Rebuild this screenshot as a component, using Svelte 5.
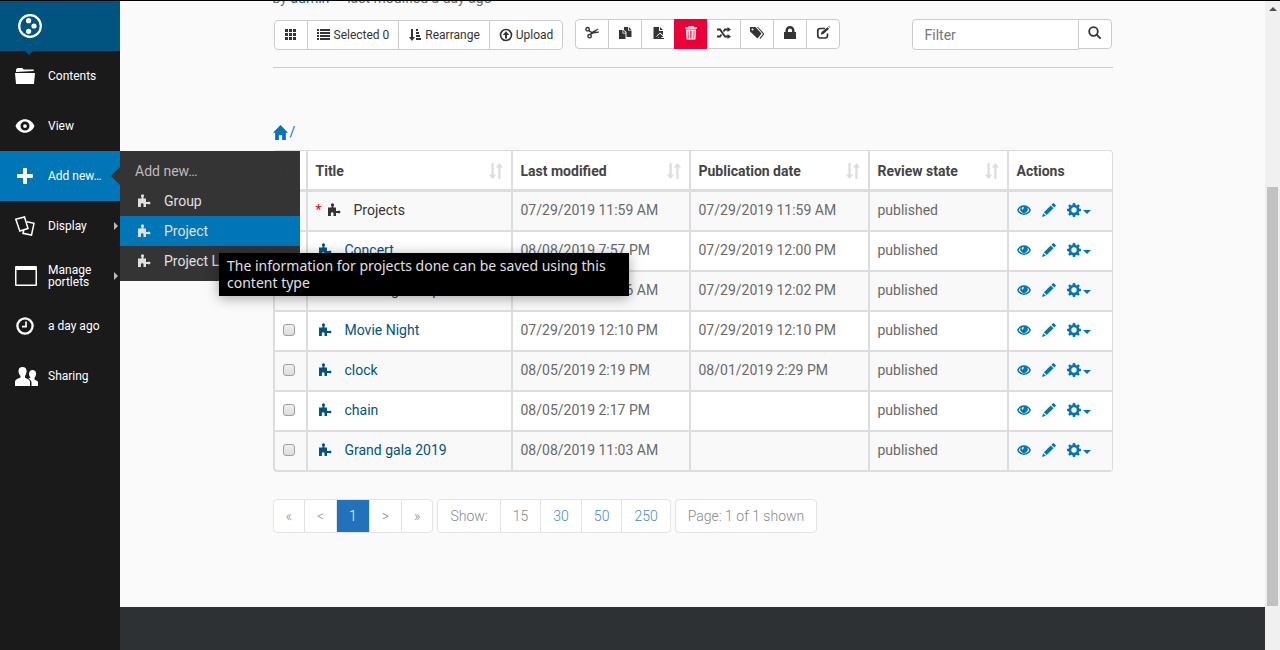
<script>
  const nav = [
    { label: 'Contents', icon: 'folder' },
    { label: 'View', icon: 'view' },
    { label: 'Add new…', icon: 'add', active: true },
    { label: 'Display', icon: 'display', more: true },
    { label: 'Manage portlets', icon: 'window', more: true },
    { label: 'a day ago', icon: 'history' },
    { label: 'Sharing', icon: 'people' }
  ];
  const types = ['Group', 'Project', 'Project List'];
  const listTools = [
    { icon: 'grid', label: '', title: 'Columns' },
    { icon: 'list', label: 'Selected 0' },
    { icon: 'sort', label: 'Rearrange' },
    { icon: 'upload', label: 'Upload' }
  ];
  const tools = [
    ['cut', 'Cut'], ['copy', 'Copy'], ['paste', 'Paste'], ['trash', 'Delete'],
    ['shuffle', 'Rename'], ['tags', 'Tags'], ['lock', 'State'], ['edit', 'Properties']
  ];
  const columns = ['Title', 'Last modified', 'Publication date', 'Review state'];
  const rows = [
    { title: 'Projects', modified: '07/29/2019 11:59 AM', published: '07/29/2019 11:59 AM', self: true },
    { title: 'Concert', modified: '08/08/2019 7:57 PM', published: '07/29/2019 12:00 PM' },
    { title: 'Wedding Group', modified: '08/08/2019 11:26 AM', published: '07/29/2019 12:02 PM' },
    { title: 'Movie Night', modified: '07/29/2019 12:10 PM', published: '07/29/2019 12:10 PM' },
    { title: 'clock', modified: '08/05/2019 2:19 PM', published: '08/01/2019 2:29 PM' },
    { title: 'chain', modified: '08/05/2019 2:17 PM', published: '' },
    { title: 'Grand gala 2019', modified: '08/08/2019 11:03 AM', published: '' }
  ];
  const pages = ['«', '<', '1', '>', '»'];
  const sizes = ['15', '30', '50', '250'];
</script>

{#snippet glyph(name)}
  <svg class="glyph" viewBox="0 0 14 14" aria-hidden="true">
    {#if name === 'grid'}
      <path d="M1 1h3v3H1zM5 1h3v3H5zM9 1h3v3H9zM1 5h3v3H1zM5 5h3v3H5zM9 5h3v3H9zM1 9h3v3H1zM5 9h3v3H5zM9 9h3v3H9z" />
    {:else if name === 'list'}
      <path d="M0 1h2v2H0zM3 1h10v2H3zM0 4h2v2H0zM3 4h10v2H3zM0 7h2v2H0zM3 7h10v2H3zM0 10h2v2H0zM3 10h10v2H3z" />
    {:else if name === 'sort'}
      <path d="M3 1h2v8h2l-3 4-3-4h2zM8 1h2v2H8zM8 4h3v2H8zM8 7h4v2H8zM8 10h5v2H8z" />
    {:else if name === 'upload'}
      <path fill-rule="evenodd" d="M7 .7a6.3 6.3 0 1 1 0 12.600a6.300 6.300 0 0 1 0-12.600zm0 1.600a4.700 4.700 0 1 0 0 9.400a4.700 4.700 0 0 0 0-9.400zM7 3.300L10.200 7H8v3.500H6V7H3.800z" />
    {:else if name === 'cut'}
      <g fill="none" stroke="currentColor"><circle cx="2.600" cy="3.200" r="1.700" stroke-width="1.400" /><circle cx="4.600" cy="10.200" r="1.700" stroke-width="1.400" /></g>
      <path d="M3.500 3.800L7 5.800 12.600 2.700l1 .6-3.500 2.500 3.700-.3v1.300l-5.500.7L5.800 9 4.700 8.300l1.200-1.600-2.900-1.800z" />
    {:else if name === 'copy'}
      <path d="M6 1h4v3.500h3.500V11H8.500V6L6 4zM10.800.9L13.600 3.700h-2.800zM1 4h3.500v3.500H7.500V13H1zM5.200 4L7.800 6.700H5.200z" />
    {:else if name === 'paste'}
      <path d="M2.500 1H8v4h4v4L9 6.500 5 10.500h2V13H2.500zM9 1l3 3H9zM9 7.500l3.500 3.500h-2v1h2.500v1H6v-1h1.500v-1h-2z" />
    {:else if name === 'trash'}
      <path fill-rule="evenodd" d="M4.500 0h5v1.200H13v1.600H1V1.200h3.500zm1.200.8v.5h2.600V.8zM2 3.500h10l-.6 10H2.600zm1.600 1l.3 8h.8l-.3-8zm2.400 0v8h.7v-8zm1.500 0v8h.7v-8zm2.200 0l-.3 8h.8l.3-8z" />
    {:else if name === 'shuffle'}
      <path fill="none" stroke="currentColor" stroke-width="1.800" d="M0 3.500h3l5 7h3M0 10.500h3l1.500-2M6.500 5.500l1.500-2h3" /><path d="M10.500 1L14 3.500 10.500 6zM10.500 8l3.500 2.500-3.500 2.500z" />
    {:else if name === 'tags'}
      <path fill-rule="evenodd" d="M0 1h5.500L11.500 7.500 7.500 12.500 0 5.500zM2.500 2.500a1 1 0 1 0 0 2a1 1 0 0 0 0-2zM7 1h1l6.500 7-4.300 5-.8-.8L13 8z" />
    {:else if name === 'lock'}
      <path fill-rule="evenodd" d="M1 6h1.500V4.500a4.500 4.500 0 0 1 9 0V6H13v7H1zM5 6h4V4.500a2 2 0 0 0-4 0z" />
    {:else if name === 'edit'}
      <path fill="none" stroke="currentColor" stroke-width="1.700" d="M9 2.500H4A2.300 2.300 0 0 0 1.800 4.800v5A2.300 2.300 0 0 0 4 12h5.300a2.300 2.300 0 0 0 2.200-2.200V7.500" /><path d="M11.500 1.300l1.500 1.500-5.500 5.200-2.800.8.900-2.800zM12.200.6l.8-.6 1 1-.6.8z" />
    {:else if name === 'search'}
      <circle cx="5.500" cy="5.500" r="4.300" fill="none" stroke="currentColor" stroke-width="1.800" /><path d="M8 9.300L9.300 8l4 4-1.300 1.300z" />
    {:else if name === 'home'}
      <path d="M7 0l7 7.300h-2V14H8.500V9.500h-3V14H2V7.300H0z" />
    {:else if name === 'order'}
      <path d="M3 0h2v10h2.200L4 14 .7 10H3zM10 0l3.300 4H11v10H9V4H6.800z" />
    {:else if name === 'eye'}
      <path fill-rule="evenodd" d="M0 7C2.500.5 11.500.5 14 7 11.500 13.500 2.500 13.500 0 7zm1.600 0c2.200 4.600 8.600 4.600 10.800 0-.6-1.200-1.400-2.100-2.300-2.700a3.700 3.700 0 1 1-6.200 0C3 4.900 2.200 5.800 1.600 7zM6.200 4a1.700 1.700 0 0 0-.9 3c.3-.9.800-1.500 1.800-1.800z" />
    {:else if name === 'pencil'}
      <path d="M0 14l1.200-3.800 2.600 2.600zM1.900 9.300l6.800-6.800 2.800 2.800-6.800 6.800zM9.500 1.700L11 .2q.4-.3.800 0l2 2q.3.400 0 .8l-1.500 1.500z" />
    {:else if name === 'gear'}
      <path fill-rule="evenodd" d="M5.900 0h2.200l.4 1.900 1.200.5 1.600-1.100 1.500 1.500-1.100 1.600.5 1.200 1.800.3v2.200l-1.800.4-.5 1.200 1.100 1.600-1.500 1.500-1.600-1.100-1.200.5-.4 1.800H5.900l-.4-1.800-1.200-.5-1.600 1.100-1.500-1.500 1.100-1.600-.5-1.200L0 8.100V5.900l1.800-.3.500-1.200-1.100-1.600 1.500-1.500 1.600 1.100 1.200-.5zM7 4.300a2.700 2.700 0 1 0 0 5.400a2.700 2.700 0 0 0 0-5.400z" />
    {:else if name === 'plugin'}
      <path d="M1 4.500h3.500V3a1.500 1.500 0 1 1 2 0v1.500H9V8h2a1.400 1.400 0 1 1 0 2H9v3H6.500v-2.500a1.300 1.300 0 0 0-2.600 0V13H1z" />
    {/if}
  </svg>
{/snippet}

{#snippet navIcon(name)}
  <svg class="nav-icon" viewBox="0 0 24 24" aria-hidden="true">
    {#if name === 'folder'}
      <path d="M2 8V5.500L3.300 4h5l1.400 1.500h10V7zM1 9h20l-1 11H2z" />
    {:else if name === 'view'}
      <path fill-rule="evenodd" d="M1.500 12C5 3 17 3 20.500 12 17 21 5 21 1.500 12zM11 7.500a4.500 4.500 0 1 0 0 9a4.500 4.500 0 0 0 0-9zm0 2.700a1.900 1.900 0 1 1 0 3.800a1.900 1.900 0 0 1 0-3.800z" />
    {:else if name === 'add'}
      <path d="M9 5q0-1 1-1h2q1 0 1 1v5h5q1 0 1 1v2q0 1-1 1h-5v5q0 1-1 1h-2q-1 0-1-1v-5H4q-1 0-1-1v-2q0-1 1-1h5z" />
    {:else if name === 'display'}
      <path fill="none" stroke="currentColor" stroke-width="1.500" d="M1.800 5.300L10.500 3 14 14.500 5.800 17zM13 7.800l7 1.500L17.500 21 9 19.300l.7-3" />
    {:else if name === 'window'}
      <path fill-rule="evenodd" d="M1 3q0-1 1-1h20q1 0 1 1v18q0 1-1 1H2q-1 0-1-1zm1.500 3v14.500h19V6z" />
    {:else if name === 'history'}
      <circle cx="11" cy="12" r="7.600" fill="none" stroke="currentColor" stroke-width="2.300" /><path fill="none" stroke="currentColor" stroke-width="1.700" d="M12 7.500v5.200H8" />
    {:else if name === 'people'}
      <path d="M8.500 3c3 0 4.500 2 4 5-.2 2-1 3-1.500 4v1.500c1 1.200 5 1.500 5 4.500v4H1v-4c0-3 4-3.500 5.500-4.500V12C5 10 4.500 9 4.500 7 4.500 4.500 6 3 8.500 3zM18.500 6c2.500 0 4 1.700 3.500 4.500-.2 1.500-1 2.500-1.500 3.500v1.500c1.500 1 4 1.500 4 4V22h-7v-3.500c0-2-1.500-3-3-4q1.300-.5 2-1-1.500-1.500-1.500-3.500C15 7.500 16.500 6 18.500 6z" />
    {/if}
  </svg>
{/snippet}

<div class="page">
  <nav class="sidebar" aria-label="Toolbar">
    <a class="logo" href="#home" aria-label="Home">
      <svg viewBox="0 0 24 24" aria-hidden="true">
        <circle cx="12" cy="12" r="10.800" fill="none" stroke="currentColor" stroke-width="2.200" />
        <circle cx="10.600" cy="6.700" r="2.600" /><circle cx="16" cy="12" r="2.600" /><circle cx="10.600" cy="17.300" r="2.600" />
      </svg>
    </a>
    <ul class="menu">
      {#each nav as item}
        <li class:active={item.active}>
          <a href="#{item.icon}">
            {@render navIcon(item.icon)}
            <span>{item.label}</span>
            {#if item.more}<i class="more"></i>{/if}
          </a>
          {#if item.active}
            <div class="submenu">
              <p>Add new…</p>
              <ul>
                {#each types as type}
                  <li class:hover={type === 'Project'}>
                    <a href="#{type}">{@render glyph('plugin')}{type}</a>
                  </li>
                {/each}
              </ul>
              <div class="tooltip" role="tooltip">The information for projects done can be saved using this content type</div>
            </div>
          {/if}
        </li>
      {/each}
    </ul>
  </nav>

  <main>
    <div class="content">
      <p class="byline">by <a href="#admin">admin</a> — last modified a day ago</p>
      <div class="toolbar">
        <div class="group wide">
          {#each listTools as tool}
            <button type="button" aria-label={tool.title}>{@render glyph(tool.icon)}{tool.label}</button>
          {/each}
        </div>
        <div class="group square">
          {#each tools as [icon, label]}
            <button type="button" class:danger={icon === 'trash'} aria-label={label}>{@render glyph(icon)}</button>
          {/each}
        </div>
        <form class="filter">
          <input type="text" placeholder="Filter" aria-label="Filter" />
          <button type="button" aria-label="Search">{@render glyph('search')}</button>
        </form>
      </div>

      <div class="crumbs"><a href="#root" aria-label="Root">{@render glyph('home')}</a><a href="#root">/</a></div>

      <table>
        <colgroup><col class="c-check" /><col /><col class="c-date" /><col class="c-pub" /><col class="c-state" /><col class="c-act" /></colgroup>
        <thead>
          <tr>
            <th><input type="checkbox" aria-label="Select all" /></th>
            {#each columns as column}
              <th><div>{column}<span class="order">{@render glyph('order')}</span></div></th>
            {/each}
            <th>Actions</th>
          </tr>
        </thead>
        <tbody>
          {#each rows as row}
            <tr>
              <td><input type="checkbox" aria-label={row.title} /></td>
              <td>
                <a class="title" class:self={row.self} href="#{row.title}">
                  {#if row.self}<b>*</b>{/if}{@render glyph('plugin')}<span>{row.title}</span>
                </a>
              </td>
              <td>{row.modified}</td>
              <td>{row.published}</td>
              <td>published</td>
              <td>
                <div class="actions">
                  <a href="#view" aria-label="View">{@render glyph('eye')}</a>
                  <a href="#edit" aria-label="Edit">{@render glyph('pencil')}</a>
                  <button type="button" aria-label="More actions">{@render glyph('gear')}<i></i></button>
                </div>
              </td>
            </tr>
          {/each}
        </tbody>
      </table>

      <div class="pagination">
        <ul>
          {#each pages as page}
            <li class:current={page === '1'}><a href="#page">{page}</a></li>
          {/each}
        </ul>
        <ul>
          <li><span>Show:</span></li>
          {#each sizes as size}
            <li class:link={size !== '15'}><a href="#size">{size}</a></li>
          {/each}
        </ul>
        <ul><li><span>Page: 1 of 1 shown</span></li></ul>
      </div>
    </div>
    <footer></footer>
  </main>

  <div class="scroll" aria-hidden="true"><i></i><div></div></div>
</div>

<style>
  :global(body) { overflow: hidden; background: #fafafa; }
  .page {
    display: flex; box-sizing: border-box; height: 100vh; overflow: hidden; border-top: 1px solid #000;
    font: 14px/20px Roboto, "Liberation Sans", sans-serif; color: #696969;
  }
  ul { list-style: none; margin: 0; padding: 0; }
  p { margin: 0; }
  a { color: #0076b7; text-decoration: none; }
  button { font: inherit; color: inherit; cursor: pointer; }
  svg { fill: currentColor; flex: none; display: block; }
  .glyph { width: 14px; height: 14px; }

  .sidebar { flex: none; width: 120px; background: #1a1a1a; z-index: 2; font-size: 12px; line-height: 12px; }
  .logo { position: relative; display: flex; align-items: center; height: 50px; padding-left: 18px; background: #00547f; color: #fff; }
  .logo svg { width: 24px; height: 24px; }
  .logo::after { content: ""; position: absolute; left: 25px; top: 50px; border: 4px solid transparent; border-top-color: #00547f; border-bottom: 0; }
  .menu > li { position: relative; }
  .menu > li > a { display: flex; align-items: center; gap: 10px; height: 50px; padding: 0 8px 0 14px; color: #fff; }
  .nav-icon { width: 24px; height: 24px; }
  .menu > .active > a { background: #0076b7; }
  .menu > .active > a::after { content: ""; position: absolute; right: 0; top: 16px; border: 9px solid transparent; border-right-color: #333; border-left: 0; }
  .more { position: absolute; right: 2px; top: 21px; border: 4px solid transparent; border-left-color: #bbb; border-right: 0; }
  .submenu { position: absolute; left: 120px; top: 0; width: 180px; box-sizing: border-box; padding: 5px 0; background: rgba(48, 48, 48, 0.98); font-size: 14px; line-height: 30px; color: #bbb; }
  .submenu p { padding-left: 15px; }
  .submenu li a { display: flex; align-items: center; gap: 13px; padding-left: 17px; color: #e0e0e0; }
  .submenu .hover { background: #0076b7; }
  .tooltip { position: absolute; left: 99px; top: 102px; width: 410px; box-sizing: border-box; padding: 4px 8px 5px; background: #000; color: #e0e0e0; font: 14px/17px "Noto Sans", "Open Sans", sans-serif; box-shadow: 0 2px 12px rgba(0, 0, 0, 0.35); }

  main { flex: 1; min-width: 0; display: flex; flex-direction: column; background: #fafafa; }
  .content { width: 100%; max-width: 840px; margin: 0 auto; padding-bottom: 74px; }
  .byline { margin-top: -13px; }
  .toolbar { display: flex; align-items: flex-start; margin-top: 11px; padding-bottom: 17px; border-bottom: 1px solid #ccc; }
  .group, .filter { display: flex; }
  .toolbar button { display: flex; align-items: center; justify-content: center; gap: 3px; box-sizing: border-box; height: 30px; padding: 0 9px; margin: 0 0 0 -1px; border: 1px solid #ccc; background: #fff; color: #333; font-size: 12px; }
  .toolbar button:first-child { border-radius: 4px 0 0 4px; }
  .toolbar button:last-child { border-radius: 0 4px 4px 0; }
  .wide { margin: 1px 12px 0 2px; }
  .square { margin-left: 1px; }
  .square button { width: 34px; padding-bottom: 2px; }
  .toolbar .danger { background: #eb0037; border-color: #eb0037; color: #fff; }
  .filter { margin: 0 1px 0 auto; }
  .filter input { box-sizing: border-box; width: 167px; height: 31px; padding: 0 12px; border: 1px solid #ccc; border-radius: 4px 0 0 4px; background: #fff; font: inherit; }
  .filter input::placeholder { color: #777; }
  .filter button { width: 34px; padding-bottom: 2px; }

  .crumbs { display: flex; align-items: center; gap: 2px; margin: 54px 0 8px; }
  .crumbs .glyph { width: 15px; height: 15px; }

  table { width: 100%; table-layout: fixed; border-collapse: separate; border-spacing: 0; border: solid #ddd; border-width: 1px 1px 0 0; border-radius: 4px; overflow: hidden; background: #fff; }
  .c-check { width: 33px; }
  .c-date { width: 178px; }
  .c-pub { width: 179px; }
  .c-state { width: 139px; }
  .c-act { width: 105px; }
  th, td { box-sizing: border-box; height: 40px; padding: 0 7px 2px; border: solid #ddd; border-width: 0 0 2px 2px; text-align: left; }
  th { height: 41px; padding: 2px 7px 0; border-bottom-width: 3px; color: #444; font-weight: 700; }
  th:not(:first-child), td:not(:first-child) { padding-left: 8px; }
  th > div { display: flex; align-items: center; justify-content: space-between; }
  .order { color: #ddd; }
  .order .glyph { width: 16px; height: 16px; }
  tbody tr:nth-child(odd) { background: #f9f9f9; }
  tr:last-child td:first-child { border-bottom-left-radius: 4px; }
  td input, th input { appearance: none; display: block; box-sizing: border-box; width: 12px; height: 12px; margin: 0 0 0 1px; border: 1px solid #a0a0a0; border-radius: 3px; background: linear-gradient(#eee, #ddd); }
  .title { display: flex; align-items: center; gap: 13px; padding-left: 2px; color: #00547f; }
  .title.self { color: #333; padding-left: 0; }
  .title b { color: #f00; font-weight: 400; margin-right: -8px; }
  .actions { display: flex; align-items: center; gap: 11px; color: #0076b7; }
  .actions button { display: flex; align-items: center; gap: 2px; padding: 0; border: 0; background: none; }
  .actions i { margin-top: 4px; border: 4px solid transparent; border-top-color: currentColor; border-bottom: 0; }

  .pagination { display: flex; gap: 4px; margin-top: 27px; font-weight: 300; color: #888; }
  .pagination ul { display: flex; border: 1px solid #e4e4e4; border-radius: 4px; background: #fff; overflow: hidden; }
  .pagination li + li { border-left: 1px solid #e4e4e4; }
  .pagination a, .pagination span { display: block; padding: 6px 12px; color: #888; }
  .pagination .link a { color: #428bca; }
  .pagination .current a { background: #2271bb; color: #fff; }

  footer { flex: 1; background: #2e3134; }
  .scroll { flex: none; display: flex; flex-direction: column; align-items: center; width: 15px; background: #f0f0f0; }
  .scroll i { margin: 6px 0 176px; border: 4px solid transparent; border-bottom-color: #505050; border-top: 0; }
  .scroll div { width: 11px; height: 64.4vh; background: #c1c1c1; }
</style>
